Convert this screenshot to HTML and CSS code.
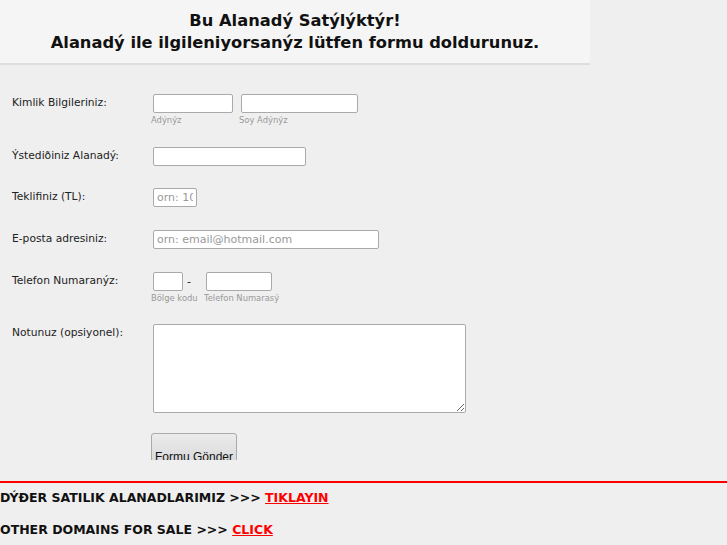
FILE: index.html
```html
<!DOCTYPE html>
<html lang="tr">
<head>
  <meta charset="UTF-8" />
  <title>Bu Alanadý Satýlýktýr!</title>
  <link rel="stylesheet" href="styles.css">
</head>
<body>
  <div class="top">
    <h1>Bu Alanadý Satýlýktýr!<br>Alanadý ile ilgileniyorsanýz lütfen formu doldurunuz.</h1>
  </div>

  <div class="form-wrap">
    <form class="offer-form">
      <div class="row">
        <label class="lbl">Kimlik Bilgileriniz:</label>
        <div class="fields">
          <div class="group">
            <input type="text" class="inp w-name">
            <span class="sub">Adýnýz</span>
          </div>
          <div class="group">
            <input type="text" class="inp w-surname">
            <span class="sub">Soy Adýnýz</span>
          </div>
        </div>
      </div>

      <div class="row row-tight">
        <label class="lbl">Ýstediðiniz Alanadý:</label>
        <div class="fields">
          <input type="text" class="inp w-domain">
        </div>
      </div>

      <div class="row">
        <label class="lbl">Teklifiniz (TL):</label>
        <div class="fields">
          <input type="text" class="inp w-price" placeholder="orn: 1000">
        </div>
      </div>

      <div class="row">
        <label class="lbl">E-posta adresiniz:</label>
        <div class="fields">
          <input type="text" class="inp w-mail" placeholder="orn: email@hotmail.com">
        </div>
      </div>

      <div class="row row-tight">
        <label class="lbl">Telefon Numaranýz:</label>
        <div class="fields">
          <div class="group g-area">
            <input type="text" class="inp w-area">
            <span class="sub">Bölge kodu</span>
          </div>
          <span class="dash">-</span>
          <div class="group">
            <input type="text" class="inp w-phone">
            <span class="sub">Telefon Numarasý</span>
          </div>
        </div>
      </div>

      <div class="row row-note">
        <label class="lbl">Notunuz (opsiyonel):</label>
        <div class="fields">
          <textarea class="inp note"></textarea>
        </div>
      </div>

      <div class="row">
        <span class="lbl"></span>
        <div class="fields">
          <button type="button" class="btn-send">Formu Gönder</button>
        </div>
      </div>
    </form>
  </div>

  <div class="others">
    <p>DÝÐER SATILIK ALANADLARIMIZ &gt;&gt;&gt; <a href="#">TIKLAYIN</a></p>
    <p>OTHER DOMAINS FOR SALE &gt;&gt;&gt; <a href="#">CLICK</a></p>
  </div>
</body>
</html>
```

FILE: styles.css
```css
body {
  margin: 0;
  padding: 0;
  background-color: #efefef;
  font-family: 'DejaVu Sans', sans-serif;
  color: #222;
}
.top {
  width: 590px;
  height: 63px;
  background-color: #f5f5f5;
  border-bottom: 2px solid #dedede;
}
.top h1 {
  margin: 0;
  padding-top: 10px;
  font-size: 16.3px;
  line-height: 22px;
  text-align: center;
  color: #111;
}
.form-wrap {
  height: 395px;
  overflow: hidden;
}
.offer-form {
  padding-top: 29px;
}
.row {
  display: flex;
  margin-bottom: 23px;
}
.row-tight {
  margin-bottom: 22px;
}
.row-note {
  margin-bottom: 20px;
}
.lbl {
  width: 139px;
  padding-left: 12px;
  padding-top: 2px;
  font-size: 10.7px;
  line-height: 14px;
  color: #222;
}
.fields {
  display: flex;
  align-items: flex-start;
}
.group {
  display: flex;
  flex-direction: column;
  margin-right: 4px;
}
.g-area {
  width: 34px;
  margin-right: 0;
}
.sub {
  margin-top: 3px;
  font-size: 8.4px;
  line-height: 8px;
  color: #999;
  white-space: nowrap;
}
.dash {
  width: 17px;
  padding-left: 2px;
  font-size: 11px;
  line-height: 19px;
}
.inp {
  box-sizing: border-box;
  height: 19px;
  margin: 0 2px;
  padding: 1px 3px;
  border: 1px solid #aaa;
  border-radius: 2px;
  background: white;
  font-family: 'DejaVu Sans', sans-serif;
  font-size: 11px;
  color: #333;
}
.inp::placeholder {
  color: #999;
}
.w-name { width: 80px; }
.w-surname { width: 117px; }
.w-domain { width: 153px; }
.w-price { width: 44px; }
.w-mail { width: 226px; }
.w-area { width: 30px; }
.w-phone { width: 66px; }
.note {
  width: 313px;
  height: 89px;
  resize: vertical;
}
.btn-send {
  width: 86px;
  height: 40px;
  padding: 8px 0 0;
  border: 1px solid #aaa;
  border-radius: 3px;
  background: linear-gradient(#ebebeb, #d4d4d8);
  font-family: 'Liberation Sans', sans-serif;
  font-size: 12px;
  color: #111;
}
.others {
  margin-top: 21px;
  border-top: 2px solid #ff0000;
}
.others p {
  margin: 0;
  padding-top: 7px;
  height: 25px;
  font-size: 12.5px;
  font-weight: bold;
  line-height: 15px;
  color: #111;
}
.others a {
  color: #ff0000;
}
```
